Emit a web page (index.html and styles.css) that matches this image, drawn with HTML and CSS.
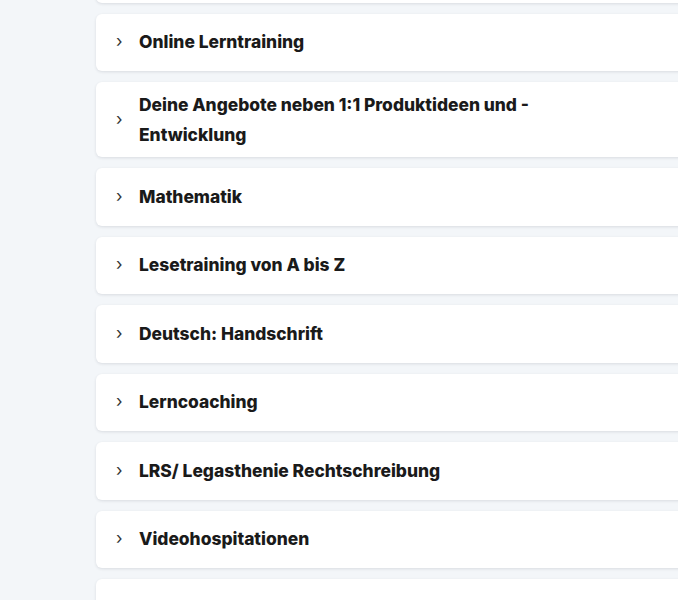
FILE: index.html
```html
<!DOCTYPE html>
<html lang="de">
<head>
  <meta charset="UTF-8">
  <meta name="viewport" content="width=device-width, initial-scale=1.0">
  <title>Kurse</title>
  <link rel="stylesheet" href="styles.css">
</head>
<body>
  <div class="list">
    <div class="card"></div>
    <div class="card"><span class="arrow">&rsaquo;</span><span class="title">Online Lerntraining</span></div>
    <div class="card"><span class="arrow">&rsaquo;</span><span class="title">Deine Angebote neben 1:1 Produktideen und - Entwicklung</span></div>
    <div class="card"><span class="arrow">&rsaquo;</span><span class="title">Mathematik</span></div>
    <div class="card"><span class="arrow">&rsaquo;</span><span class="title">Lesetraining von A bis Z</span></div>
    <div class="card"><span class="arrow">&rsaquo;</span><span class="title">Deutsch: Handschrift</span></div>
    <div class="card"><span class="arrow">&rsaquo;</span><span class="title">Lerncoaching</span></div>
    <div class="card"><span class="arrow">&rsaquo;</span><span class="title">LRS/ Legasthenie Rechtschreibung</span></div>
    <div class="card"><span class="arrow">&rsaquo;</span><span class="title">Videohospitationen</span></div>
    <div class="card"></div>
  </div>
</body>
</html>
```

FILE: styles.css
```css
body {
  font-family: Inter, Lato, sans-serif;
  margin: 0;
  padding: 0;
  background-color: #f3f6f9;
  overflow: hidden;
  height: 600px;
}
.list {
  display: flex;
  flex-direction: column;
  gap: 11px;
  padding-left: 96px;
  margin-top: -55px;
  width: 640px;
}
.card {
  display: flex;
  align-items: center;
  min-height: 57.5px;
  box-sizing: border-box;
  padding: 7.5px 20px;
  background-color: #fff;
  border-radius: 6px;
  box-shadow: 0 1px 3px rgba(30, 40, 60, 0.12);
}
.arrow {
  width: 23px;
  flex: none;
  font-size: 17px;
  color: #333;
  margin-top: -2px;
}
.title {
  font-size: 17.4px;
  font-weight: 800;
  line-height: 30px;
  color: #1a1a1a;
  max-width: 440px;
}
```
